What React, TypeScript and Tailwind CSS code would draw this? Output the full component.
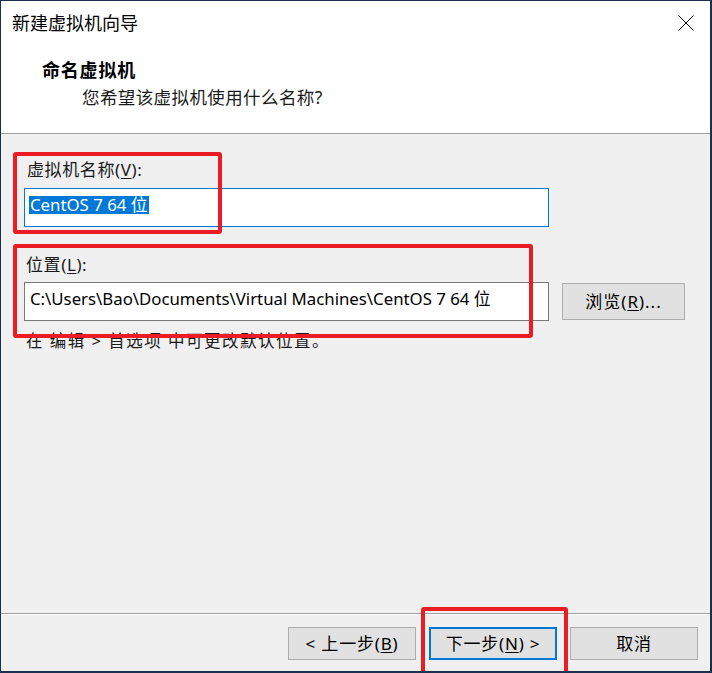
import React from "react";

const font = { fontFamily: '"Noto Sans", "Noto Sans CJK SC", sans-serif' };

const Btn = ({ children, focused }: { children: React.ReactNode; focused?: boolean }) => (
  <div
    className={
      "w-[128px] h-[33px] flex items-center justify-center bg-[#e1e1e1] text-[17px] tracking-[0.8px] text-black " +
      (focused ? "border-2 border-[#0078d7]" : "border border-[#adadad]")
    }
  >
    {children}
  </div>
);

export default function App() {
  return (
    <div
      className="relative w-[712px] h-[673px] flex flex-col bg-[#f0f0f0] border-t border-l border-r-2 border-b-2 border-[#1b2f4f] overflow-hidden"
      style={font}
    >
      {/* header */}
      <div className="h-[133px] shrink-0 bg-white border-b border-[#a0a0a0] flex flex-col">
        <div className="h-[44px] flex items-center justify-between pl-[11px] pr-[16px]">
          <span className="text-[18px] text-black leading-none">新建虚拟机向导</span>
          <svg width="16" height="16" viewBox="0 0 16 16" className="mb-[1px]">
            <path d="M0.5 0.5 L15.5 15.5 M15.5 0.5 L0.5 15.5" stroke="#000" strokeWidth="1" />
          </svg>
        </div>
        <div className="pl-[41px] mt-[14px] text-[18px] font-bold leading-[22px] text-black tracking-[0.8px]">
          命名虚拟机
        </div>
        <div className="pl-[81px] mt-[5px] text-[17.5px] leading-[22px] text-[#1a1a1a] tracking-[0.4px]">
          您希望该虚拟机使用什么名称?
        </div>
      </div>

      {/* body */}
      <div className="flex-1 flex flex-col pl-[23px]">
        <div className="mt-[25px] h-[20px] flex items-center pl-[3px] text-[17px] leading-none text-[#1a1a1a] tracking-[0.6px]">
          虚拟机名称(<span className="underline underline-offset-2">V</span>):
        </div>
        <div className="mt-[9px] w-[525px] h-[39px] bg-white border border-[#0078d7] flex items-center pl-[4px] pb-[6px]">
          <span className="bg-[#0078d7] text-white text-[16.8px] leading-[18px] px-px">CentOS 7 64 位</span>
        </div>

        <div className="mt-[27px] h-[20px] flex items-center pl-[2px] text-[17px] leading-none text-[#1a1a1a] tracking-[0.6px]">
          位置(<span className="underline underline-offset-2">L</span>):
        </div>
        <div className="mt-[8px] flex items-start">
          <div className="w-[525px] h-[39px] bg-white border border-[#7a7a7a] flex items-center pl-[5px] pb-[6px]">
            <span className="text-[16.8px] leading-[18px] text-black">
              C:\Users\Bao\Documents\Virtual Machines\CentOS 7 64 位
            </span>
          </div>
          <div className="ml-[13px] mt-px w-[123px] h-[37px] bg-[#e1e1e1] border border-[#adadad] flex items-center justify-center text-[17px] tracking-[1px] text-black">
            浏览(<span className="underline underline-offset-2">R</span>)...
          </div>
        </div>
        <div className="mt-[10px] h-[20px] flex items-center pl-[2px] text-[16.5px] leading-none text-[#1a1a1a] tracking-[1.5px]">
          在 编辑 &gt; 首选项 中可更改默认位置。
        </div>
      </div>

      {/* footer */}
      <div className="shrink-0 h-[58px] flex flex-col">
        <div className="h-px bg-[#a0a0a0]" />
        <div className="h-px bg-white" />
        <div className="mt-[12px] flex justify-end gap-[13px] pr-[12px]">
          <Btn>
            &lt; 上一步(<span className="underline underline-offset-2">B</span>)
          </Btn>
          <Btn focused>
            下一步(<span className="underline underline-offset-2">N</span>) &gt;
          </Btn>
          <Btn>取消</Btn>
        </div>
      </div>

      {/* red annotation boxes */}
      <div className="absolute left-[12px] top-[151px] w-[209px] h-[82px] border-4 border-[#ec1c24] rounded-[3px]" />
      <div className="absolute left-[12px] top-[243px] w-[520px] h-[94px] border-4 border-[#ec1c24] rounded-[3px]" />
      <div className="absolute left-[420px] top-[606px] w-[147px] h-[80px] border-4 border-[#ec1c24] rounded-[3px]" />
    </div>
  );
}
